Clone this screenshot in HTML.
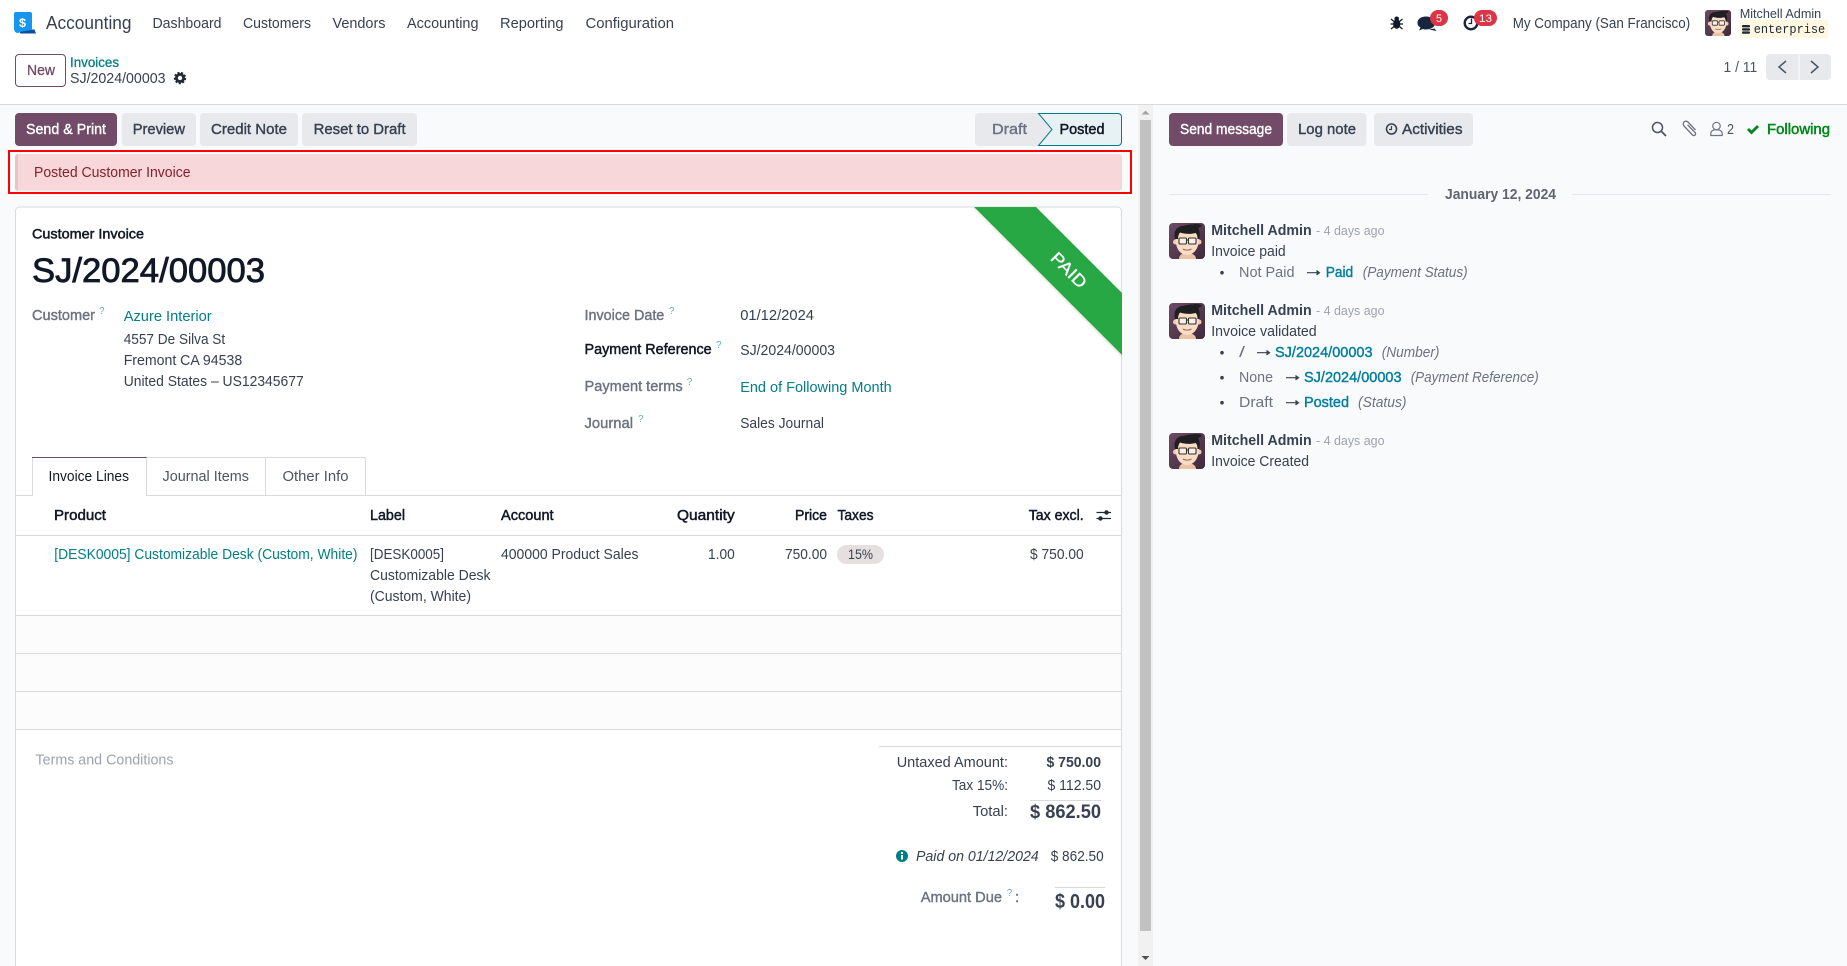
<!DOCTYPE html>
<html><head><meta charset="utf-8"><title>Accounting</title>
<style>
html,body{margin:0;padding:0;background:#fff;width:1847px;height:966px;overflow:hidden}
svg{display:block}
text{font-family:"Liberation Sans",sans-serif;font-size:15px;fill:#374151;white-space:pre}
.m{stroke:#374151;stroke-width:.4px}
.w{fill:#fff;stroke:#fff;stroke-width:.4px}
.b{fill:#374151;stroke:#374151;stroke-width:.4px}
.d{fill:#111827;stroke:#111827;stroke-width:.5px}
.l{fill:#017E84}
.g{fill:#6b7280;stroke:#6b7280;stroke-width:.4px}
.q{fill:#5fb3c4;font-size:10px}
.c{fill:#017e9e;stroke:#017e9e;stroke-width:.4px}
.s{fill:#4b5563}
.i{font-style:italic;fill:#6b7280}
</style></head><body>
<svg width="1847" height="966" viewBox="0 0 1847 966" xmlns="http://www.w3.org/2000/svg">
<defs>
<linearGradient id="ag" x1="0" y1="0" x2="1" y2="1"><stop offset="0" stop-color="#6d4a64"/><stop offset="1" stop-color="#3f2a3b"/></linearGradient>
<symbol id="av" viewBox="0 0 36 36">
<rect width="36" height="36" rx="4" fill="url(#ag)"/>
<path d="M10 36c0-4 3-6 8-6s9 2 9 6z" fill="#e9c3a6"/>
<circle cx="6.500" cy="19" r="2.500" fill="#f1cbb0"/>
<circle cx="30" cy="19" r="2.500" fill="#f1cbb0"/>
<path d="M6.500 15c0 11 5 17 11.500 17s12-6 12-17-5-10-12-10-11.500 1-11.500 10z" fill="#f9dcc4"/>
<path d="M6 16C4 7 9 3 14 3c4-1 13-3 19-1-1 2-3 3-4 3 2 3 2 7 1 11h-1.500c0-3-.5-5-2-6-5 1.500-11 1-15.500-.5-1.500 2-2 4-2 6.500z" fill="#1f1f23"/>
<rect x="10" y="15" width="7.500" height="6" rx="1" fill="#fff" fill-opacity=".6" stroke="#33302f" stroke-width="1.100"/>
<rect x="19.500" y="15" width="7.500" height="6" rx="1" fill="#fff" fill-opacity=".6" stroke="#33302f" stroke-width="1.100"/>
<path d="M17.500 17h2" stroke="#33302f" stroke-width="1"/>
<path d="M14 26c2 1.500 6 1.500 8.500 0" stroke="#9b6a55" stroke-width="1.100" fill="none"/>
</symbol>
</defs>

<!-- backgrounds -->
<rect x="0" y="105" width="1847" height="861" fill="#f9fafb"/>
<rect x="0" y="104" width="1847" height="1" fill="#d8dadd"/>

<!-- navbar -->
<path d="M20 33.500h16l-1.500-4H20z" fill="#0b4ea2"/>
<path d="M14 14a2 2 0 0 1 2-2h14a2 2 0 0 1 2 2v16l-10 1.500-4 1.500a4 4 0 0 1-4-4z" fill="#1597ef"/>
<text x="19" y="27" textLength="7" lengthAdjust="spacingAndGlyphs" style="font-size:12px;font-weight:700;fill:#fff">$</text>
<text x="46" y="29" textLength="85.500" lengthAdjust="spacingAndGlyphs" style="font-size:18px">Accounting</text>
<text x="152.500" y="28" textLength="69" lengthAdjust="spacingAndGlyphs">Dashboard</text>
<text x="243" y="28" textLength="68" lengthAdjust="spacingAndGlyphs">Customers</text>
<text x="332.500" y="28" textLength="53" lengthAdjust="spacingAndGlyphs">Vendors</text>
<text x="407" y="28" textLength="71.500" lengthAdjust="spacingAndGlyphs">Accounting</text>
<text x="500" y="28" textLength="63.500" lengthAdjust="spacingAndGlyphs">Reporting</text>
<text x="585.500" y="28" textLength="88.500" lengthAdjust="spacingAndGlyphs">Configuration</text>

<!-- bug -->
<g fill="#111827" stroke="#111827">
<ellipse cx="1396.700" cy="24" rx="3.600" ry="4.800" stroke="none"/>
<circle cx="1396.700" cy="18.800" r="2.300" stroke="none"/>
<path d="M1391 19l3 2.500M1402.500 19l-3 2.500M1390.500 24h3M1403 24h-3M1391 29l3-2.500M1402.500 29l-3-2.500" stroke-width="1.200" fill="none"/>
</g>
<!-- chat -->
<path d="M1426 16.500c5 0 9 2.500 9 6.500s-4 6.500-9 6.500c-1 0-2 0-3-.5l-4 1.500 1.500-3c-2-1-3-2.500-3-4.500 0-4 3.500-6.500 8.500-6.500z" fill="#17263c"/>
<path d="M1429 29.500l5.500-1 2 2.500-2.500-.5z" fill="#17263c"/>
<rect x="1430" y="10" width="18" height="16" rx="8" fill="#dc3545"/>
<text x="1436" y="22" textLength="6" lengthAdjust="spacingAndGlyphs" style="font-size:11px;fill:#fff">5</text>
<!-- clock -->
<circle cx="1471" cy="23" r="6.300" fill="none" stroke="#17263c" stroke-width="2.400"/>
<path d="M1471.500 18.500v5h-3" fill="none" stroke="#17263c" stroke-width="1.300"/>
<rect x="1474" y="10" width="23" height="16" rx="8" fill="#dc3545"/>
<text x="1479" y="22" textLength="13" lengthAdjust="spacingAndGlyphs" style="font-size:11px;fill:#fff">13</text>

<text x="1512.700" y="28" textLength="177.500" lengthAdjust="spacingAndGlyphs">My Company (San Francisco)</text>
<use href="#av" x="1705" y="10" width="26" height="26"/>
<text x="1739.700" y="18" textLength="81.500" lengthAdjust="spacingAndGlyphs" style="font-size:13px">Mitchell Admin</text>
<rect x="1739" y="20" width="89" height="18" fill="#fff8e1"/>
<g fill="#1f2937"><rect x="1742" y="25" width="8" height="2.400" rx="1"/><rect x="1742" y="28.200" width="8" height="2.400" rx="1"/><rect x="1742" y="31.400" width="8" height="2.400" rx="1"/></g>
<text x="1753.700" y="33" textLength="71.500" lengthAdjust="spacingAndGlyphs" style="font-family:'Liberation Mono',monospace;font-size:13px;fill:#1f2937">enterprise</text>

<!-- control panel -->
<rect x="15.500" y="54.500" width="50" height="32" rx="3.500" fill="#fff" stroke="#714B67"/>
<text x="27" y="75" textLength="28" lengthAdjust="spacingAndGlyphs" style="fill:#714B67;stroke:#714B67;stroke-width:.3px">New</text>
<text x="70" y="67" textLength="49" lengthAdjust="spacingAndGlyphs" style="font-size:13.500px;fill:#017E84;stroke:#017E84;stroke-width:.3px">Invoices</text>
<text x="70" y="83" textLength="95.500" lengthAdjust="spacingAndGlyphs">SJ/2024/00003</text>
<circle cx="180" cy="78" r="3.600" fill="none" stroke="#1f2937" stroke-width="2.800"/>
<circle cx="180" cy="78" r="5.300" fill="none" stroke="#1f2937" stroke-width="1.800" stroke-dasharray="2.100 1.600"/>
<text x="1723.500" y="72" textLength="33.700" lengthAdjust="spacingAndGlyphs" class="s">1 / 11</text>
<rect x="1766" y="54" width="65" height="26" rx="4" fill="#e7e9ed"/>
<rect x="1798.500" y="54" width="1" height="26" fill="#fff"/>
<path d="M1786 61l-7 6 7 6M1811 61l7 6-7 6" fill="none" stroke="#4b5563" stroke-width="1.500"/>

<!-- action buttons -->
<rect x="15" y="113" width="102" height="33" rx="4" fill="#714B67"/>
<text x="26" y="134" textLength="80" lengthAdjust="spacingAndGlyphs" class="w">Send &amp; Print</text>
<rect x="121.700" y="113" width="74.300" height="33" rx="4" fill="#e7e9ed"/>
<text x="132.700" y="134" textLength="52.300" lengthAdjust="spacingAndGlyphs" class="m">Preview</text>
<rect x="200" y="113" width="98" height="33" rx="4" fill="#e7e9ed"/>
<text x="211" y="134" textLength="76" lengthAdjust="spacingAndGlyphs" class="m">Credit Note</text>
<rect x="302" y="113" width="115" height="33" rx="4" fill="#e7e9ed"/>
<text x="313.600" y="134" textLength="92" lengthAdjust="spacingAndGlyphs" class="m">Reset to Draft</text>

<!-- status bar -->
<rect x="975" y="113" width="147" height="33" rx="4" fill="#e7e9ed"/>
<text x="992" y="134" textLength="35" lengthAdjust="spacingAndGlyphs" class="g">Draft</text>
<path d="M1038.500 113.500H1118a3.500 3.500 0 0 1 3.500 3.500v25a3.500 3.500 0 0 1-3.500 3.500h-79.500l13.500-16z" fill="#e6f2f3" stroke="#017E84"/>
<text x="1059.500" y="134" textLength="45" lengthAdjust="spacingAndGlyphs" class="d">Posted</text>

<!-- alert -->
<rect x="15" y="154" width="1107" height="36.700" rx="3" fill="#f8d7da"/>
<path d="M18 154a3 3 0 0 0-3 3v30.700a3 3 0 0 0 3 3z" fill="#ecc2c6"/>
<text x="34" y="177" textLength="156.500" lengthAdjust="spacingAndGlyphs" style="fill:#842029">Posted Customer Invoice</text>
<rect x="9" y="151" width="1122" height="42" fill="none" stroke="#f00" stroke-width="2"/>

<!-- sheet -->
<path d="M15.500 970V211a4 4 0 0 1 4-4H1117.500a4 4 0 0 1 4 4V970z" fill="#fff" stroke="#d8dadd"/>
<path d="M974 208l148 147-1 2-148-148z" fill="#000" fill-opacity=".06"/>
<path d="M974 207h62l86 86v62z" fill="#28a745"/>
<text x="1069" y="270" transform="rotate(45 1069 270)" text-anchor="middle" dy="6" textLength="43" lengthAdjust="spacingAndGlyphs" style="font-size:17px;fill:#fff;stroke:#fff;stroke-width:.3px">PAID</text>

<text x="32" y="238.700" textLength="112" lengthAdjust="spacingAndGlyphs" class="d" style="font-size:14px">Customer Invoice</text>
<text x="32" y="282" textLength="233" lengthAdjust="spacingAndGlyphs" class="d" style="font-size:34px;stroke-width:.8px">SJ/2024/00003</text>

<text x="32" y="320" textLength="63" lengthAdjust="spacingAndGlyphs" class="g">Customer</text><text x="99" y="314" class="q">?</text>
<text x="123.700" y="321" textLength="88" lengthAdjust="spacingAndGlyphs" class="l">Azure Interior</text>
<text x="123.700" y="344" textLength="101.500" lengthAdjust="spacingAndGlyphs">4557 De Silva St</text>
<text x="123.700" y="365" textLength="118.500" lengthAdjust="spacingAndGlyphs">Fremont CA 94538</text>
<text x="123.700" y="386" textLength="180" lengthAdjust="spacingAndGlyphs">United States – US12345677</text>

<text x="584.500" y="320" textLength="79.800" lengthAdjust="spacingAndGlyphs" class="g">Invoice Date</text><text x="669" y="314" class="q">?</text>
<text x="740.200" y="320" textLength="73.800" lengthAdjust="spacingAndGlyphs">01/12/2024</text>
<text x="584.500" y="354" textLength="127.200" lengthAdjust="spacingAndGlyphs" class="d">Payment Reference</text><text x="716" y="348" class="q">?</text>
<text x="740.200" y="355" textLength="94.800" lengthAdjust="spacingAndGlyphs">SJ/2024/00003</text>
<text x="584.500" y="391" textLength="98.200" lengthAdjust="spacingAndGlyphs" class="g">Payment terms</text><text x="686.700" y="385" class="q">?</text>
<text x="740.200" y="392" textLength="151.500" lengthAdjust="spacingAndGlyphs" class="l">End of Following Month</text>
<text x="584.500" y="428" textLength="48.500" lengthAdjust="spacingAndGlyphs" class="g">Journal</text><text x="638" y="422" class="q">?</text>
<text x="740.200" y="428" textLength="83.800" lengthAdjust="spacingAndGlyphs">Sales Journal</text>

<!-- tabs -->
<rect x="16" y="495" width="1105" height="1" fill="#d8dadd"/>
<path d="M32.500 496V457.500H146.500V496" fill="#fff" stroke="#d8dadd"/>
<rect x="32" y="457" width="115" height="1" fill="#714B67"/>
<rect x="33" y="495" width="113" height="1.500" fill="#fff"/>
<path d="M146.500 457.500H265.500V495M265.500 457.500H365.500V495" fill="none" stroke="#d8dadd"/>
<text x="48.500" y="481" textLength="80.500" lengthAdjust="spacingAndGlyphs" style="fill:#111827">Invoice Lines</text>
<text x="162.500" y="481" textLength="86.500" lengthAdjust="spacingAndGlyphs" class="s">Journal Items</text>
<text x="282.500" y="481" textLength="66" lengthAdjust="spacingAndGlyphs" class="s">Other Info</text>

<!-- table -->
<text x="54" y="520" textLength="52" lengthAdjust="spacingAndGlyphs" class="d">Product</text>
<text x="370" y="520" textLength="35" lengthAdjust="spacingAndGlyphs" class="d">Label</text>
<text x="501" y="520" textLength="52.600" lengthAdjust="spacingAndGlyphs" class="d">Account</text>
<text x="677" y="520" textLength="57.700" lengthAdjust="spacingAndGlyphs" class="d">Quantity</text>
<text x="795" y="520" textLength="32" lengthAdjust="spacingAndGlyphs" class="d">Price</text>
<text x="837.500" y="520" textLength="36" lengthAdjust="spacingAndGlyphs" class="d">Taxes</text>
<text x="1028.700" y="520" textLength="55" lengthAdjust="spacingAndGlyphs" class="d">Tax excl.</text>
<path d="M1096.500 512.500h14.500M1096.500 518.500h14.500" stroke="#1f2937" stroke-width="1.200"/>
<circle cx="1106.500" cy="512.500" r="2.200" fill="#1f2937"/><circle cx="1100.500" cy="518.500" r="2.200" fill="#1f2937"/>
<rect x="16" y="535" width="1105" height="1" fill="#d8dadd"/>

<text x="54.300" y="559" textLength="303.200" lengthAdjust="spacingAndGlyphs" class="l">[DESK0005] Customizable Desk (Custom, White)</text>
<text x="370" y="559" textLength="74" lengthAdjust="spacingAndGlyphs">[DESK0005]</text>
<text x="370" y="580" textLength="120.500" lengthAdjust="spacingAndGlyphs">Customizable Desk</text>
<text x="370" y="601" textLength="101" lengthAdjust="spacingAndGlyphs">(Custom, White)</text>
<text x="501" y="559" textLength="137.500" lengthAdjust="spacingAndGlyphs">400000 Product Sales</text>
<text x="708" y="559" textLength="26.700" lengthAdjust="spacingAndGlyphs">1.00</text>
<text x="785" y="559" textLength="42" lengthAdjust="spacingAndGlyphs">750.00</text>
<rect x="837" y="545" width="47" height="19" rx="9.500" fill="#e6dfdf"/>
<text x="848" y="559" textLength="25" lengthAdjust="spacingAndGlyphs" style="font-size:13.500px">15%</text>
<text x="1030" y="559" textLength="53.700" lengthAdjust="spacingAndGlyphs">$ 750.00</text>
<rect x="16" y="616" width="1105" height="113" fill="#fcfcfc"/>
<rect x="16" y="615" width="1105" height="1" fill="#d8dadd"/>
<rect x="16" y="653" width="1105" height="1" fill="#d8dadd"/>
<rect x="16" y="691" width="1105" height="1" fill="#d8dadd"/>
<rect x="16" y="729" width="1105" height="1" fill="#d8dadd"/>

<text x="35.500" y="764.500" textLength="138" lengthAdjust="spacingAndGlyphs" style="fill:#9ca3af">Terms and Conditions</text>

<!-- totals -->
<rect x="879" y="746" width="242" height="1" fill="#d8dadd"/>
<text x="896.700" y="767" textLength="111.300" lengthAdjust="spacingAndGlyphs">Untaxed Amount:</text>
<text x="1046.500" y="767" textLength="54.500" lengthAdjust="spacingAndGlyphs" style="font-weight:700">$ 750.00</text>
<text x="952" y="790" textLength="56" lengthAdjust="spacingAndGlyphs">Tax 15%:</text>
<text x="1047.500" y="790" textLength="53.500" lengthAdjust="spacingAndGlyphs">$ 112.50</text>
<rect x="1030" y="800" width="71" height="1" fill="#d8dadd"/>
<text x="972.700" y="816" textLength="35.300" lengthAdjust="spacingAndGlyphs">Total:</text>
<text x="1030" y="818" textLength="71" lengthAdjust="spacingAndGlyphs" style="font-size:19px;font-weight:700">$ 862.50</text>
<circle cx="902" cy="856" r="6" fill="#017E84"/>
<rect x="901" y="855" width="2" height="4.500" fill="#fff"/><rect x="901" y="852" width="2" height="2" fill="#fff"/>
<text x="916" y="861" textLength="122.700" lengthAdjust="spacingAndGlyphs" style="font-style:italic">Paid on 01/12/2024</text>
<text x="1050.700" y="861" textLength="53" lengthAdjust="spacingAndGlyphs">$ 862.50</text>
<text x="920.700" y="902" textLength="81.300" lengthAdjust="spacingAndGlyphs" class="g">Amount Due</text><text x="1006.700" y="896" class="q">?</text>
<text x="1015" y="902" class="g">:</text>
<rect x="1055" y="887" width="50" height="1" fill="#d8dadd"/>
<text x="1055" y="908" textLength="50" lengthAdjust="spacingAndGlyphs" style="font-size:20px;font-weight:700">$ 0.00</text>

<!-- scrollbar -->
<rect x="1138" y="105" width="15" height="861" fill="#f1f1f1"/>
<rect x="1140" y="120" width="11" height="811" fill="#c1c1c1"/>
<path d="M1145.500 110.500l4 4h-8z" fill="#a3a3a3"/>
<path d="M1141.500 956h8l-4 4z" fill="#505050"/>

<!-- chatter toolbar -->
<rect x="1169" y="113" width="114" height="33" rx="4" fill="#714B67"/>
<text x="1180" y="134" textLength="92" lengthAdjust="spacingAndGlyphs" class="w">Send message</text>
<rect x="1287" y="113" width="79.500" height="33" rx="4" fill="#e7e9ed"/>
<text x="1298" y="134" textLength="58" lengthAdjust="spacingAndGlyphs" class="m">Log note</text>
<rect x="1374" y="113" width="99" height="33" rx="4" fill="#e7e9ed"/>
<circle cx="1391.500" cy="129" r="5" fill="none" stroke="#374151" stroke-width="1.600"/>
<path d="M1391.500 126v3.500h-2.500" fill="none" stroke="#374151" stroke-width="1.200"/>
<text x="1402" y="134" textLength="60.500" lengthAdjust="spacingAndGlyphs" class="m">Activities</text>
<circle cx="1657.500" cy="127.500" r="5" fill="none" stroke="#4b5563" stroke-width="1.500"/>
<path d="M1661 131l5 5" stroke="#4b5563" stroke-width="1.800"/>
<path d="M1694 131l-7.500-8a2.800 2.800 0 0 0-4 4l8.500 9a1.700 1.700 0 0 0 2.600-2.400l-7.500-7.800" transform="translate(1.500,-1)" fill="none" stroke="#6b7280" stroke-width="1.300"/>
<circle cx="1716.500" cy="126" r="3.700" fill="none" stroke="#6b7280" stroke-width="1.200"/>
<path d="M1710.800 135.500v-1.500c0-3 2-4.300 5.700-4.300s5.700 1.300 5.700 4.300v1.500z" fill="none" stroke="#6b7280" stroke-width="1.200"/>
<text x="1727" y="134" textLength="7" lengthAdjust="spacingAndGlyphs" class="s">2</text>
<path d="M1748 129l3.500 3.500 6.500-6.500" fill="none" stroke="#008818" stroke-width="2.800"/>
<text x="1767" y="134" textLength="63" lengthAdjust="spacingAndGlyphs" style="fill:#008818;stroke:#008818;stroke-width:.5px">Following</text>

<!-- date separator -->
<rect x="1169" y="194" width="259" height="1" fill="#e5e7eb"/>
<rect x="1572" y="194" width="259" height="1" fill="#e5e7eb"/>
<text x="1445" y="199" textLength="111" lengthAdjust="spacingAndGlyphs" style="font-size:14.500px;font-weight:700;fill:#5f6570">January 12, 2024</text>

<!-- messages -->
<use href="#av" x="1169" y="223" width="36" height="36"/>
<text x="1211.200" y="235" textLength="100.500" lengthAdjust="spacingAndGlyphs" style="font-weight:700">Mitchell Admin</text>
<text x="1316" y="235" textLength="68.500" lengthAdjust="spacingAndGlyphs" style="font-size:13px;fill:#9ca3af">- 4 days ago</text>
<text x="1211.200" y="256" textLength="74.500" lengthAdjust="spacingAndGlyphs">Invoice paid</text>
<circle cx="1222" cy="272.700" r="1.800" fill="#374151"/>
<text x="1239" y="277" textLength="55.500" lengthAdjust="spacingAndGlyphs" style="fill:#6b7280">Not Paid</text>
<path d="M1307 272.700h12M1316.500 270.500l3 2.200-3 2.200" fill="#374151" stroke="#374151" stroke-width="1.200"/>
<text x="1325.700" y="277" textLength="27.500" lengthAdjust="spacingAndGlyphs" class="c">Paid</text>
<text x="1362.700" y="277" textLength="105" lengthAdjust="spacingAndGlyphs" class="i">(Payment Status)</text>

<use href="#av" x="1169" y="303" width="36" height="36"/>
<text x="1211.200" y="315" textLength="100.500" lengthAdjust="spacingAndGlyphs" style="font-weight:700">Mitchell Admin</text>
<text x="1316" y="315" textLength="68.500" lengthAdjust="spacingAndGlyphs" style="font-size:13px;fill:#9ca3af">- 4 days ago</text>
<text x="1211.200" y="336" textLength="105.500" lengthAdjust="spacingAndGlyphs">Invoice validated</text>
<circle cx="1222" cy="352.700" r="1.800" fill="#374151"/>
<text x="1239" y="357" textLength="6" lengthAdjust="spacingAndGlyphs" style="fill:#6b7280">/</text>
<path d="M1257 352.700h12M1266.500 350.500l3 2.200-3 2.200" fill="#374151" stroke="#374151" stroke-width="1.200"/>
<text x="1275" y="357" textLength="97.500" lengthAdjust="spacingAndGlyphs" class="c">SJ/2024/00003</text>
<text x="1381.700" y="357" textLength="57.800" lengthAdjust="spacingAndGlyphs" class="i">(Number)</text>
<circle cx="1222" cy="377.700" r="1.800" fill="#374151"/>
<text x="1239" y="382" textLength="34" lengthAdjust="spacingAndGlyphs" style="fill:#6b7280">None</text>
<path d="M1286 377.700h12M1295.500 375.500l3 2.200-3 2.200" fill="#374151" stroke="#374151" stroke-width="1.200"/>
<text x="1304" y="382" textLength="97.500" lengthAdjust="spacingAndGlyphs" class="c">SJ/2024/00003</text>
<text x="1410.700" y="382" textLength="128" lengthAdjust="spacingAndGlyphs" class="i">(Payment Reference)</text>
<circle cx="1222" cy="402.700" r="1.800" fill="#374151"/>
<text x="1239" y="407" textLength="34" lengthAdjust="spacingAndGlyphs" style="fill:#6b7280">Draft</text>
<path d="M1286 402.700h12M1295.500 400.500l3 2.200-3 2.200" fill="#374151" stroke="#374151" stroke-width="1.200"/>
<text x="1304" y="407" textLength="45" lengthAdjust="spacingAndGlyphs" class="c">Posted</text>
<text x="1358" y="407" textLength="48.500" lengthAdjust="spacingAndGlyphs" class="i">(Status)</text>

<use href="#av" x="1169" y="433" width="36" height="36"/>
<text x="1211.200" y="445" textLength="100.500" lengthAdjust="spacingAndGlyphs" style="font-weight:700">Mitchell Admin</text>
<text x="1316" y="445" textLength="68.500" lengthAdjust="spacingAndGlyphs" style="font-size:13px;fill:#9ca3af">- 4 days ago</text>
<text x="1211.200" y="466" textLength="97.800" lengthAdjust="spacingAndGlyphs">Invoice Created</text>
</svg>
</body></html>
